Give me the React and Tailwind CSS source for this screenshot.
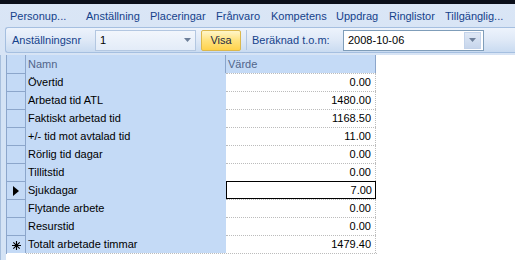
import React from 'react';

const tabs = [
  { label: 'Personup...', w: 'w-[76px]' },
  { label: 'Anställning', w: 'w-[64px]' },
  { label: 'Placeringar', w: 'w-[66px]' },
  { label: 'Frånvaro', w: 'w-[55px]' },
  { label: 'Kompetens', w: 'w-[65px]' },
  { label: 'Uppdrag', w: 'w-[53px]' },
  { label: 'Ringlistor', w: 'w-[56px]' },
  { label: 'Tillgänglig...', w: 'w-[70px]' },
];

const rows = [
  { name: 'Övertid', value: '0.00' },
  { name: 'Arbetad tid ATL', value: '1480.00' },
  { name: 'Faktiskt arbetad tid', value: '1168.50' },
  { name: '+/- tid mot avtalad tid', value: '11.00' },
  { name: 'Rörlig tid dagar', value: '0.00' },
  { name: 'Tillitstid', value: '0.00' },
  { name: 'Sjukdagar', value: '7.00', current: true },
  { name: 'Flytande arbete', value: '0.00' },
  { name: 'Resurstid', value: '0.00' },
  { name: 'Totalt arbetade timmar', value: '1479.40', isNew: true },
];

function ComboArrow() {
  return (
    <svg width="7" height="4" viewBox="0 0 7 4">
      <path d="M0 0h7L3.5 4z" fill="#6d7f99" />
    </svg>
  );
}

export default function App() {
  return (
    <div
      className="w-[515px] h-[260px] overflow-hidden bg-gradient-to-b from-[#dae6f6] to-[#cddcf0] text-[11px] leading-none"
      style={{ fontFamily: '"Liberation Sans", Arial, sans-serif' }}
    >
      {/* Top dark band */}
      <div className="h-[4px] bg-[#0b0f1a]" />

      {/* Tabs */}
      <div className="flex items-center h-[22px] pl-[10px] text-[#15428b]">
        {tabs.map(t => (
          <div key={t.label} className={`${t.w} shrink-0 whitespace-nowrap pt-[2px]`}>{t.label}</div>
        ))}
      </div>

      {/* Toolbar */}
      <div className="ml-[5px] h-[26px] mt-[1px] flex items-center rounded-l-[3px] border border-r-0 border-[#a5bfe0] bg-gradient-to-b from-[#edf3fc] via-[#dfe9f7] to-[#c9dbf1]">
        <div className="w-[89px] pl-[6px] text-[#15428b]">Anställningsnr</div>
        <div className="w-[101px] h-[21px] flex items-center justify-between px-[4px] border border-[#b3c7e1] bg-gradient-to-b from-[#f2f6fc] to-[#e3ecf8] text-black">
          <span>1</span>
          <ComboArrow />
        </div>
        <div className="ml-[5px] w-[40px] h-[21px] flex items-center justify-center rounded-[2px] border border-[#dbb84e] bg-gradient-to-b from-[#fff6c9] via-[#ffe27c] to-[#ffd24a] text-[#1d2a44]">
          Visa
        </div>
        <div className="ml-[5px] w-px h-[20px] bg-[#b1c6e2]" />
        <div className="w-[96px] pl-[5px] text-[#15428b]">Beräknad t.o.m:</div>
        <div className="w-[141px] h-[21px] flex items-center justify-between pl-[4px] pr-[2px] border border-[#7f9db9] bg-white text-black">
          <span>2008-10-06</span>
          <div className="w-[17px] h-[17px] flex items-center justify-center bg-gradient-to-b from-[#dfe8f5] to-[#c7d6ec] border border-[#c3d3ea]">
            <ComboArrow />
          </div>
        </div>
      </div>

      {/* Grid area */}
      <div className="mt-[2px] flex h-[206px]">
        <div className="w-[6px] shrink-0 border-l border-[#a7bfdd] bg-[#d4e3f5]" />
        <div className="flex-1 bg-white">
          <div className="flex w-[370px] flex-col border-l border-[#8ca6cb]">
            {/* Header */}
            <div className="flex h-[18px]">
              <div className="w-[19px] border-r border-[#8ca6cb] bg-[#c4daf6]" />
              <div className="w-[200px] pl-[2px] flex items-center bg-[#c4daf6] text-[#51658a] border-r border-[#8ca6cb]">Namn</div>
              <div className="w-[150px] pl-[2px] flex items-center bg-[#c4daf6] text-[#51658a] border-r border-[#8ca6cb]">Värde</div>
            </div>
            {rows.map(r => (
              <div key={r.name} className="flex h-[18px]">
                <div className="w-[19px] flex items-center justify-center border-r border-t border-[#8ca6cb] bg-[#c4daf6]">
                  {r.current && (
                    <svg width="6" height="10" viewBox="0 0 6 10"><path d="M0 0l6 5-6 5z" fill="#000" /></svg>
                  )}
                  {r.isNew && (
                    <svg width="9" height="9" viewBox="0 0 9 9" className="mt-[2px]">
                      <path d="M4.5 0v9M0 4.5h9M1.3 1.3l6.4 6.4M7.7 1.3L1.3 7.7" stroke="#000" strokeWidth="1.1" />
                    </svg>
                  )}
                </div>
                <div className="w-[200px] pl-[2px] flex items-center bg-[#c4daf6] text-black">{r.name}</div>
                <div
                  className={
                    r.current
                      ? 'w-[150px] flex items-center justify-end pr-[3px] border border-black text-black'
                      : 'w-[150px] flex items-center justify-end pr-[4px] border-t border-r border-dotted border-[#bcbcbc] text-black'
                  }
                >
                  {r.value}
                </div>
              </div>
            ))}
            <div className="w-[351px] border-t border-dotted border-[#bcbcbc] ml-[19px]" />
          </div>
        </div>
      </div>
    </div>
  );
}
